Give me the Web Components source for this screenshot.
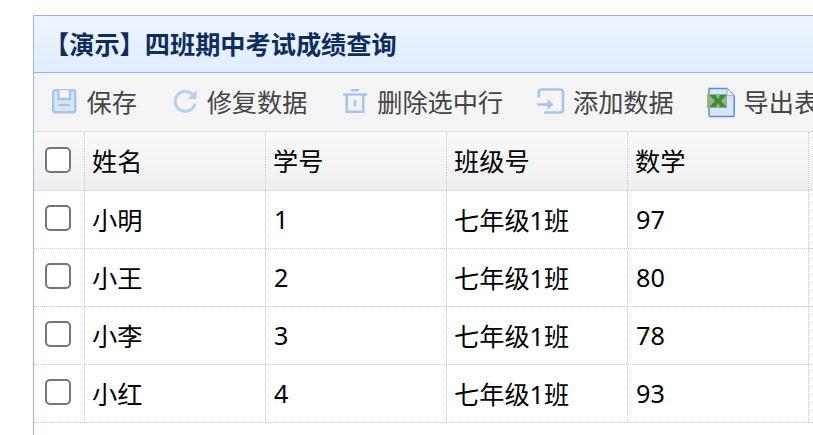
<!DOCTYPE html>
<html lang="zh-CN">
<head>
<meta charset="utf-8">
<title>四班期中考试成绩查询</title>
<style>
  html, body { overflow: hidden; height: 100%; }
  body {
    margin: 0;
    padding: 15px 0 0 33px;
    box-sizing: border-box;
    background: #fff;
    color: #000;
    font-family: "Noto Sans", "Noto Sans CJK SC", sans-serif;
    font-size: 25.2px;
  }
</style>
</head>
<body>

<exam-panel heading="【演示】四班期中考试成绩查询">
  <panel-toolbar slot="toolbar">
    <tool-button icon="save">保存</tool-button>
    <tool-button icon="reload">修复数据</tool-button>
    <tool-button icon="trash">删除选中行</tool-button>
    <tool-button icon="add">添加数据</tool-button>
    <tool-button icon="excel">导出表格</tool-button>
  </panel-toolbar>
  <grid-row head name="姓名" no="学号" cls="班级号" math="数学"></grid-row>
  <grid-row name="小明" no="1" cls="七年级1班" math="97"></grid-row>
  <grid-row name="小王" no="2" cls="七年级1班" math="80"></grid-row>
  <grid-row name="小李" no="3" cls="七年级1班" math="78"></grid-row>
  <grid-row name="小红" no="4" cls="七年级1班" math="93"></grid-row>
</exam-panel>

<script>
// panel with title bar, toolbar slot and the grid rows
class ExamPanel extends HTMLElement {
  connectedCallback() {
    this.attachShadow({ mode: 'open' });
    this.shadowRoot.innerHTML = `
      <style>
        :host {
          display: block;
          width: 1000px;
          min-height: 600px;
          border-left: 1px solid #95b8e7;
          border-top: 1px solid #95b8e7;
          box-sizing: border-box;
        }
        .title {
          height: 56px;
          box-sizing: content-box;
          display: flex;
          align-items: center;
          padding-left: 10px;
          background: linear-gradient(180deg, #eff5ff 0%, #e0ecff 100%);
          border-bottom: 1px solid #95b8e7;
          color: #0e2d5f;
          font-weight: 700;
          font-size: 25.2px;
          line-height: 1;
        }
        .title span { padding-top: 2px; }
      </style>
      <div class="title"><span></span></div>
      <slot name="toolbar"></slot>
      <slot></slot>
    `;
    this.shadowRoot.querySelector('.title span').textContent = this.getAttribute('heading');
  }
}
customElements.define('exam-panel', ExamPanel);

class PanelToolbar extends HTMLElement {
  connectedCallback() {
    this.attachShadow({ mode: 'open' });
    this.shadowRoot.innerHTML = `
      <style>
        :host {
          display: flex;
          align-items: center;
          gap: 34.3px;
          height: 59px;
          box-sizing: border-box;
          padding: 0 0 0 17px;
          background: #f4f4f4;
          border-bottom: 1px solid #dddddd;
          white-space: nowrap;
        }
      </style>
      <slot></slot>
    `;
  }
}
customElements.define('panel-toolbar', PanelToolbar);

// icons are 28x28 boxes, same light blue as the easyui "metro" set
const ICONS = {
  save: `<rect x="2.2" y="2.200" width="22" height="22" rx="2" fill="#d9e6f8" stroke="#a6c5ee" stroke-width="2.400"/>
         <path d="M7.500 2.200v8.800h11.500V2.200" fill="#f4f4f4" stroke="#a6c5ee" stroke-width="2.400"/>
         <path d="M7.500 17h11.500" stroke="#a6c5ee" stroke-width="2.400"/>`,
  reload: `<path d="M22.800 8.200A10 10 0 1 0 24 15.500" fill="none" stroke="#b4cff2" stroke-width="3"/>
           <path d="M25.500 2.500v8.500h-8.500z" fill="#b4cff2"/>`,
  trash: `<path d="M1 6.500h24" stroke="#a6c5ee" stroke-width="2.400"/>
          <path d="M9 2.200h8" stroke="#a6c5ee" stroke-width="2.400"/>
          <path d="M4.800 7v16.800h16.400V7" fill="none" stroke="#a6c5ee" stroke-width="2.600"/>
          <path d="M13 12v6.500" stroke="#a6c5ee" stroke-width="2.400"/>`,
  add: `<path d="M1.800 9.500V4a2.500 2.500 0 0 1 2.500-2.500H23.500A2.500 2.500 0 0 1 26 4v18a2.500 2.500 0 0 1-2.500 2.500H7" fill="none" stroke="#a6c5ee" stroke-width="2.600"/>
        <path d="M0.500 16.500h11.500" stroke="#a6c5ee" stroke-width="2.600"/>
        <path d="M10.500 11l6 5.500-6 5.500z" fill="#a6c5ee"/>`,
  excel: `<path d="M1 0.500H19l7.200 7.200v19.300a1.500 1.500 0 0 1-1.500 1.500H2.500A1.500 1.500 0 0 1 1 27z" fill="#d6e5f8" stroke="#5f8fd0" stroke-width="1.500"/>
          <path d="M19 0.500v7.200h7.200" fill="#eef4fc" stroke="#8fb2e2" stroke-width="1"/>
          <rect x="-1" y="6" width="20" height="14" fill="#8fb587"/>
          <path d="M1.500 7h6l2.500 4 2.500-4h6l-5.500 6 5.500 6h-6l-2.500-4-2.500 4h-6l5.500-6z" fill="#3f8a37"/>`
};

class ToolButton extends HTMLElement {
  connectedCallback() {
    this.attachShadow({ mode: 'open' });
    this.shadowRoot.innerHTML = `
      <style>
        :host {
          display: flex;
          align-items: center;
          gap: 7.500px;
          color: #444;
          font-size: 25.2px;
          line-height: 1;
        }
        svg { width: 28px; height: 28px; flex: none; display: block; overflow: visible; }
        span { padding-top: 2px; }
      </style>
      <svg viewBox="0 0 28 28">${ICONS[this.getAttribute('icon')]}</svg>
      <span><slot></slot></span>
    `;
  }
}
customElements.define('tool-button', ToolButton);

// one line of the grid, header rows just get the grey gradient
class GridRow extends HTMLElement {
  connectedCallback() {
    const cells = ['name', 'no', 'cls', 'math'].map((k) => this.getAttribute(k));
    this.attachShadow({ mode: 'open' });
    this.shadowRoot.innerHTML = `
      <style>
        :host {
          display: grid;
          grid-template-columns: 51px repeat(5, 181px);
          height: 58px;
          box-sizing: border-box;
          border-bottom: 1px dotted #ccc;
          font-size: 25.2px;
          line-height: 1;
          background: #fff;
        }
        :host([head]) {
          height: 59px;
          background: linear-gradient(180deg, #f9f9f9 0%, #efefef 100%);
          border-bottom: 1px solid #dddddd;
        }
        .cell {
          display: flex;
          align-items: center;
          padding-left: 7px;
          border-right: 1px dotted #ccc;
        }
        .cell span { padding-top: 2px; }
        .cell span.num { padding-top: 0; padding-left: 1px; }
        .check { padding-left: 11px; }
        .box {
          width: 26px;
          height: 26px;
          box-sizing: border-box;
          border: 2px solid #767676;
          border-radius: 5px;
          background: #fff;
          margin-top: -3px;
        }
      </style>
      <div class="cell check"><div class="box"></div></div>
      ${cells.map((c) => `<div class="cell"><span class="${/^\d+$/.test(c) ? 'num' : ''}">${c}</span></div>`).join('')}
      <div class="cell"></div>
    `;
  }
}
customElements.define('grid-row', GridRow);
</script>
</body>
</html>
